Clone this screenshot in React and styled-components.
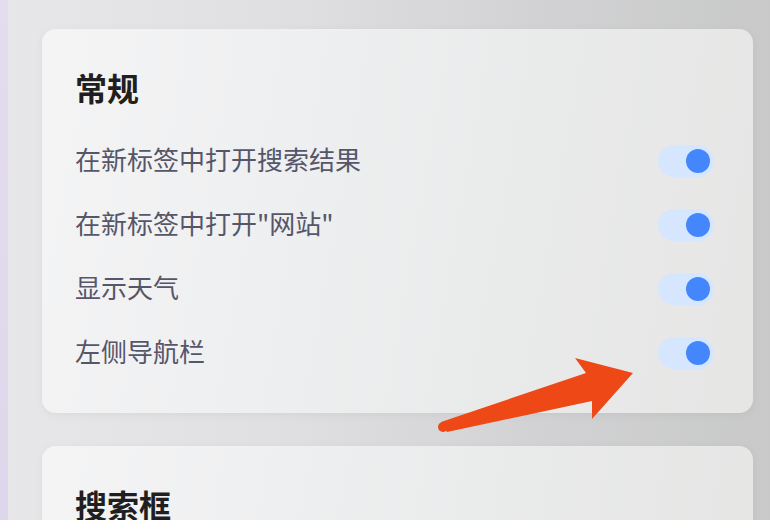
import React from "react";
import styled, { createGlobalStyle } from "styled-components";

const Global = createGlobalStyle`
  html, body { margin: 0; padding: 0; width: 770px; height: 520px; overflow: hidden; }
  body { font-family: "Noto Sans CJK SC", "Noto Sans", sans-serif; }
`;

const Page = styled.div`
  position: relative;
  display: flex;
  width: 770px;
  height: 520px;
  overflow: hidden;
`;

const SideStrip = styled.div`
  width: 8px;
  flex: none;
  background: linear-gradient(180deg, #e4ddee, #ded6ea);
`;

const Main = styled.div`
  flex: 1;
  display: flex;
  flex-direction: column;
  gap: 33px;
  padding: 29px 17px 0 34px;
  background: linear-gradient(90deg, #e7e6e9 0%, #e0e0e2 35%, #d2d2d4 70%, #c8c9c8 100%);
`;

const Card = styled.section`
  flex: none;
  display: flex;
  flex-direction: column;
  padding: 38px 39px 30px 33px;
  border-radius: 14px;
  background: linear-gradient(100deg, #f4f4f5 0%, #eeeff0 35%, #e9eaea 65%, #e6e6e5 100%);
  box-shadow: 0 2px 10px rgba(0, 0, 0, 0.05);
`;

const Title = styled.h2`
  margin: 0 0 20px;
  font-size: 32px;
  line-height: 40px;
  font-weight: 700;
  color: #1f1f22;
`;

const Row = styled.div`
  height: 64px;
  display: flex;
  align-items: center;
  justify-content: space-between;
`;

const Label = styled.span`
  font-size: 26px;
  line-height: 32px;
  color: #56566a;
`;

const Track = styled.div`
  width: 56px;
  height: 32px;
  margin-top: 4px;
  border-radius: 16px;
  background: ${(p) => (p.$on ? "#d5e6fe" : "#dcdce0")};
  display: flex;
  align-items: center;
  justify-content: ${(p) => (p.$on ? "flex-end" : "flex-start")};
  padding: 0 4px;
  box-sizing: border-box;
`;

const Knob = styled.div`
  width: 24px;
  height: 24px;
  border-radius: 50%;
  background: ${(p) => (p.$on ? "#4487fd" : "#fff")};
`;

const ArrowSvg = styled.svg`
  position: absolute;
  left: 0;
  top: 0;
  pointer-events: none;
`;

const Toggle = ({ on }) => (
  <Track $on={on}>
    <Knob $on={on} />
  </Track>
);

const general = [
  "在新标签中打开搜索结果",
  "在新标签中打开\"网站\"",
  "显示天气",
  "左侧导航栏",
];

export default function App() {
  return (
    <>
      <Global />
      <Page>
        <SideStrip />
        <Main>
          <Card>
            <Title>常规</Title>
            {general.map((t) => (
              <Row key={t}>
                <Label>{t}</Label>
                <Toggle on />
              </Row>
            ))}
          </Card>
          <Card>
            <Title>搜索框</Title>
          </Card>
        </Main>
        <ArrowSvg width="770" height="520" viewBox="0 0 770 520">
          <polygon
            fill="#ee4816"
            points="633,373 575,358 586,373 441,422 447,432 592,401 592,419"
          />
          <circle cx="443" cy="427" r="5" fill="#ee4816" />
        </ArrowSvg>
      </Page>
    </>
  );
}
